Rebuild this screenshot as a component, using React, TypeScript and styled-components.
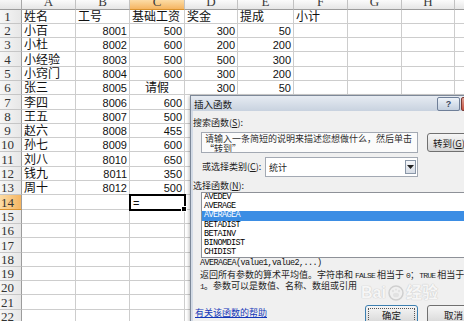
import React from 'react';
import styled, { createGlobalStyle, css } from 'styled-components';

const Global = createGlobalStyle`
  html, body { margin: 0; padding: 0; width: 464px; height: 321px; overflow: hidden; background: #fff; }
  #root { position: relative; width: 464px; height: 321px; overflow: hidden; }
`;

const colWidths = [54, 54, 55, 53, 56, 54, 54, 53, 60];
const letters = ['A', 'B', 'C', 'D', 'E', 'F', 'G', 'H', 'I'];

const rows: string[][] = [
  ['姓名', '工号', '基础工资', '奖金', '提成', '小计'],
  ['小百', '8001', '500', '300', '50'],
  ['小杜', '8002', '600', '200', '200'],
  ['小经验', '8003', '500', '500', '300'],
  ['小窍门', '8004', '600', '300', '200'],
  ['张三', '8005', '请假', '300', '50'],
  ['李四', '8006', '600'],
  ['王五', '8007', '500'],
  ['赵六', '8008', '455'],
  ['孙七', '8009', '600'],
  ['刘八', '8010', '650'],
  ['钱九', '8011', '350'],
  ['周十', '8012', '500'],
  ['', '', '='],
];

const Sheet = styled.div`
  display: grid;
  grid-template-columns: 22px ${colWidths.map((w) => `${w}px`).join(' ')};
  grid-template-rows: 9.5px repeat(22, 14.3px);
  font-family: "Liberation Sans", "Noto Sans CJK SC", sans-serif;
`;

const Corner = styled.div`
  background: linear-gradient(#f7f7f7, #e4e4e4);
  border-right: 1px solid #a8a8a8;
  border-bottom: 1px solid #9c9c9c;
  box-sizing: border-box;
`;

const ColHead = styled.div<{ $active?: boolean }>`
  box-sizing: border-box;
  display: flex;
  align-items: flex-end;
  justify-content: center;
  overflow: hidden;
  padding-bottom: 1px;
  font-family: "Liberation Serif", serif;
  font-size: 13px;
  line-height: 12px;
  color: #3a3a3a;
  background: linear-gradient(#fbfbfb, #e6e6e6);
  border-right: 1px solid #c2c2c2;
  border-bottom: 1px solid #9c9c9c;
  ${(p) =>
    p.$active &&
    css`
      background: linear-gradient(#fcdca6, #f5b561);
      border-bottom-color: #d9922f;
    `}
`;

const RowHead = styled.div<{ $active?: boolean }>`
  box-sizing: border-box;
  display: flex;
  align-items: flex-end;
  justify-content: center;
  padding-right: 6px;
  font-family: "Liberation Serif", serif;
  font-size: 13px;
  line-height: 13px;
  color: #333;
  background: linear-gradient(90deg, #f6f6f6, #e7e7e7);
  border-right: 1px solid #9c9c9c;
  border-bottom: 1px solid #c6c6c6;
  ${(p) =>
    p.$active &&
    css`
      background: linear-gradient(90deg, #fcdca6, #f5b561);
      border-bottom-color: #d9922f;
    `}
`;

const Cell = styled.div<{ $align: 'left' | 'right' | 'center'; $num?: boolean; $sel?: boolean }>`
  position: relative;
  box-sizing: border-box;
  display: flex;
  align-items: flex-end;
  justify-content: ${(p) => (p.$align === 'right' ? 'flex-end' : p.$align === 'center' ? 'center' : 'flex-start')};
  padding: 0 2px 0 2px;
  white-space: nowrap;
  border-right: 1px solid #cdcdcd;
  border-bottom: 1px solid #cdcdcd;
  color: #111;
  font-family: ${(p) => (p.$num ? '"Liberation Sans", sans-serif' : '"Noto Sans CJK SC", sans-serif')};
  font-size: ${(p) => (p.$num ? '11px' : '12px')};
  line-height: ${(p) => (p.$num ? '12px' : '14px')};
  ${(p) =>
    p.$sel &&
    css`
      outline: 2px solid #000;
      outline-offset: -1px;
      z-index: 1;
      padding-left: 3px;
      &::after {
        content: '';
        position: absolute;
        right: -3px;
        bottom: -3px;
        width: 4px;
        height: 4px;
        background: #000;
        border: 1px solid #fff;
      }
    `}
`;

/* ---------- dialog ---------- */

const Dialog = styled.div`
  position: absolute;
  left: 190px;
  top: 95px;
  width: 302px;
  height: 240px;
  box-sizing: border-box;
  border: 1px solid #7d8898;
  background: #d3dbe6;
  padding: 0 2px 2px 2px;
  display: flex;
  flex-direction: column;
  font-family: "Noto Sans CJK SC", sans-serif;
  font-size: 9px;
  color: #1c1c1c;
  box-shadow: -1px 1px 3px rgba(0, 0, 0, 0.25);
`;

const TitleBar = styled.div`
  height: 15px;
  margin: 0 -2px;
  padding-left: 3px;
  display: flex;
  align-items: center;
  background: linear-gradient(#e6ebf2, #c8d2df);
  font-size: 9.5px;
  color: #1a1a1a;
`;

const TitleButtons = styled.div`
  margin-left: auto;
  margin-right: 2px;
  display: flex;
  gap: 1px;
  align-self: flex-start;
  margin-top: 1px;
`;

const CaptionBtn = styled.div<{ $close?: boolean }>`
  box-sizing: border-box;
  width: ${(p) => (p.$close ? '28px' : '23px')};
  height: 14px;
  border: 1px solid ${(p) => (p.$close ? '#7a3a33' : '#6f7f98')};
  border-radius: 2px;
  background: ${(p) => (p.$close ? 'linear-gradient(#e0a196, #c4503f)' : 'linear-gradient(#eef3f9, #c3cfde)')};
  display: flex;
  align-items: center;
  justify-content: center;
  font-family: "Liberation Sans", sans-serif;
  font-weight: bold;
  font-size: 9px;
  color: #3c4a60;
`;

const Body = styled.div`
  flex: 1;
  background: #f0f0f0;
  padding-right: 9px;
  display: flex;
  flex-direction: column;
  position: relative;
`;

const Label = styled.div<{ $top: number; $indent?: number }>`
  margin-top: ${(p) => p.$top}px;
  margin-left: ${(p) => p.$indent ?? 0}px;
  line-height: 12px;
  height: 12px;
  white-space: nowrap;
`;

const Row = styled.div<{ $top: number }>`
  display: flex;
  align-items: flex-start;
  margin-top: ${(p) => p.$top}px;
`;

const TextBox = styled.div`
  box-sizing: border-box;
  margin-left: 8px;
  width: 217px;
  height: 21px;
  border: 1px solid #a3a9b3;
  background: #fbfbfb;
  padding: 1px 3px 0 3px;
  line-height: 9.5px;
  color: #2e2e2e;
  white-space: nowrap;
  overflow: hidden;
`;

const Button = styled.div<{ $default?: boolean }>`
  box-sizing: border-box;
  width: 53px;
  height: 20px;
  border: 1px solid #707070;
  border-radius: 3px;
  background: linear-gradient(#f6f6f6 0%, #e6e6e6 50%, #d6d6d6 100%);
  display: flex;
  align-items: center;
  justify-content: center;
  white-space: nowrap;
  color: #1a1a1a;
  font-size: 9.5px;
  position: relative;
  ${(p) =>
    p.$default &&
    css`
      border-color: #3c7fb1;
      &::before {
        content: '';
        position: absolute;
        inset: 2px;
        border: 1px dotted #555;
      }
    `}
`;

const GoButton = styled(Button)`
  margin-left: auto;
  margin-top: 1px;
  height: 19px;
  justify-content: flex-start;
  padding-left: 5px;
`;

const SelectLabel = styled.div`
  margin-left: 9px;
  width: 63px;
  line-height: 20px;
  white-space: nowrap;
`;

const Select = styled.div`
  box-sizing: border-box;
  width: 153px;
  height: 20px;
  border: 1px solid #a3a9b3;
  background: #fff;
  display: flex;
  align-items: center;
  padding-left: 3px;
  padding-right: 1px;
`;

const DropBtn = styled.div`
  margin-left: auto;
  box-sizing: border-box;
  width: 11px;
  height: 14px;
  border: 1px solid #8a97a8;
  background: linear-gradient(#f5f7fa, #d7dde6);
  display: flex;
  align-items: center;
  justify-content: center;
`;

const ListBox = styled.div`
  box-sizing: border-box;
  margin-left: 8px;
  width: 279px;
  height: 66px;
  border: 1px solid #8e9198;
  background: #fff;
  overflow: hidden;
  font-family: "Liberation Mono", monospace;
  font-size: 8.5px;
  letter-spacing: -0.6px;
  color: #000;
`;

const ListItem = styled.div<{ $sel?: boolean }>`
  height: 9.2px;
  line-height: 9.2px;
  padding-left: 2px;
  white-space: nowrap;
  overflow: hidden;
  ${(p) =>
    p.$sel &&
    css`
      background: #3b8de4;
      color: #fff;
    `}
`;

const Syntax = styled.div`
  margin-left: 7px;
  height: 10px;
  line-height: 10px;
  font-family: "Liberation Mono", monospace;
  font-size: 8.5px;
  letter-spacing: -0.6px;
  white-space: nowrap;
  color: #111;
`;

const Desc = styled.div`
  margin-top: 2px;
  margin-left: 7px;
  line-height: 9.5px;
  white-space: nowrap;
  color: #1e1e1e;
`;

const Ascii = styled.span`
  font-family: "Liberation Mono", monospace;
  font-size: 8px;
  letter-spacing: -0.8px;
`;

const Footer = styled.div`
  display: flex;
  align-items: flex-start;
  margin-top: 14px;
`;

const HelpLink = styled.a`
  margin-left: 2px;
  margin-top: 2px;
  line-height: 12px;
  color: #1438b8;
  text-decoration: underline;
  cursor: pointer;
`;

const FooterButtons = styled.div`
  margin-left: auto;
  display: flex;
  gap: 9px;
`;

const Watermark = styled.div`
  position: absolute;
  left: 168px;
  top: 174px;
  display: flex;
  align-items: center;
  gap: 2px;
  font-family: "Liberation Sans", "Noto Sans CJK SC", sans-serif;
  font-weight: bold;
  font-size: 16px;
  line-height: 16px;
  color: #f6f6f6;
  text-shadow: 0 0 1px #c9c9c9, 0 0 1px #c9c9c9;
  pointer-events: none;
`;

const functions = ['AVEDEV', 'AVERAGE', 'AVERAGEA', 'BETADIST', 'BETAINV', 'BINOMDIST', 'CHIDIST'];

export default function App() {
  return (
    <>
      <Global />
      <Sheet>
        <Corner />
        {letters.map((l, i) => (
          <ColHead key={l} $active={i === 2}>
            {l}
          </ColHead>
        ))}
        {Array.from({ length: 22 }, (_, r) => (
          <React.Fragment key={r}>
            <RowHead $active={r === 13}>{r + 1}</RowHead>
            {letters.map((_, c) => {
              const v = rows[r]?.[c] ?? '';
              const num = /^\d+$/.test(v);
              const align = num ? 'right' : v === '请假' ? 'center' : 'left';
              return (
                <Cell key={c} $align={align} $num={num || v === '='} $sel={r === 13 && c === 2}>
                  {v}
                </Cell>
              );
            })}
          </React.Fragment>
        ))}
      </Sheet>

      <Dialog>
        <TitleBar>
          插入函数
          <TitleButtons>
            <CaptionBtn>?</CaptionBtn>
            <CaptionBtn $close />
          </TitleButtons>
        </TitleBar>
        <Body>
          <Label $top={6}>
            搜索函数(<u>S</u>):
          </Label>
          <Row $top={3}>
            <TextBox>
              请输入一条简短的说明来描述您想做什么，然后单击
              <br />
              “转到”
            </TextBox>
            <GoButton>
              转到(<u>G</u>)
            </GoButton>
          </Row>
          <Row $top={4}>
            <SelectLabel>
              或选择类别(<u>C</u>):
            </SelectLabel>
            <Select>
              统计
              <DropBtn>
                <svg width="7" height="4" viewBox="0 0 7 4">
                  <path d="M0 0 L7 0 L3.5 4 Z" fill="#222" />
                </svg>
              </DropBtn>
            </Select>
          </Row>
          <Label $top={3}>
            选择函数(<u>N</u>):
          </Label>
          <ListBox>
            {functions.map((f) => (
              <ListItem key={f} $sel={f === 'AVERAGEA'}>
                {f}
              </ListItem>
            ))}
          </ListBox>
          <Syntax>AVERAGEA(value1,value2,...)</Syntax>
          <Desc>
            返回所有参数的算术平均值。字符串和 <Ascii>FALSE</Ascii> 相当于 <Ascii>0</Ascii>；<Ascii>TRUE</Ascii> 相当于
            <br />
            <Ascii>1</Ascii>。参数可以是数值、名称、数组或引用
          </Desc>
          <Footer>
            <HelpLink>有关该函数的帮助</HelpLink>
            <FooterButtons>
              <Button $default>确定</Button>
              <Button>取消</Button>
            </FooterButtons>
          </Footer>
          <Watermark>
            Bai
            <svg width="16" height="16" viewBox="0 0 16 16">
              <circle cx="8" cy="8" r="7" fill="none" stroke="#cfcfcf" strokeWidth="1.5" />
              <ellipse cx="8" cy="10" rx="3" ry="2.3" fill="#e2e2e2" />
              <circle cx="5" cy="6" r="1.2" fill="#e2e2e2" />
              <circle cx="11" cy="6" r="1.2" fill="#e2e2e2" />
              <circle cx="8" cy="4.6" r="1.1" fill="#e2e2e2" />
            </svg>
            经验
          </Watermark>
        </Body>
      </Dialog>
    </>
  );
}
